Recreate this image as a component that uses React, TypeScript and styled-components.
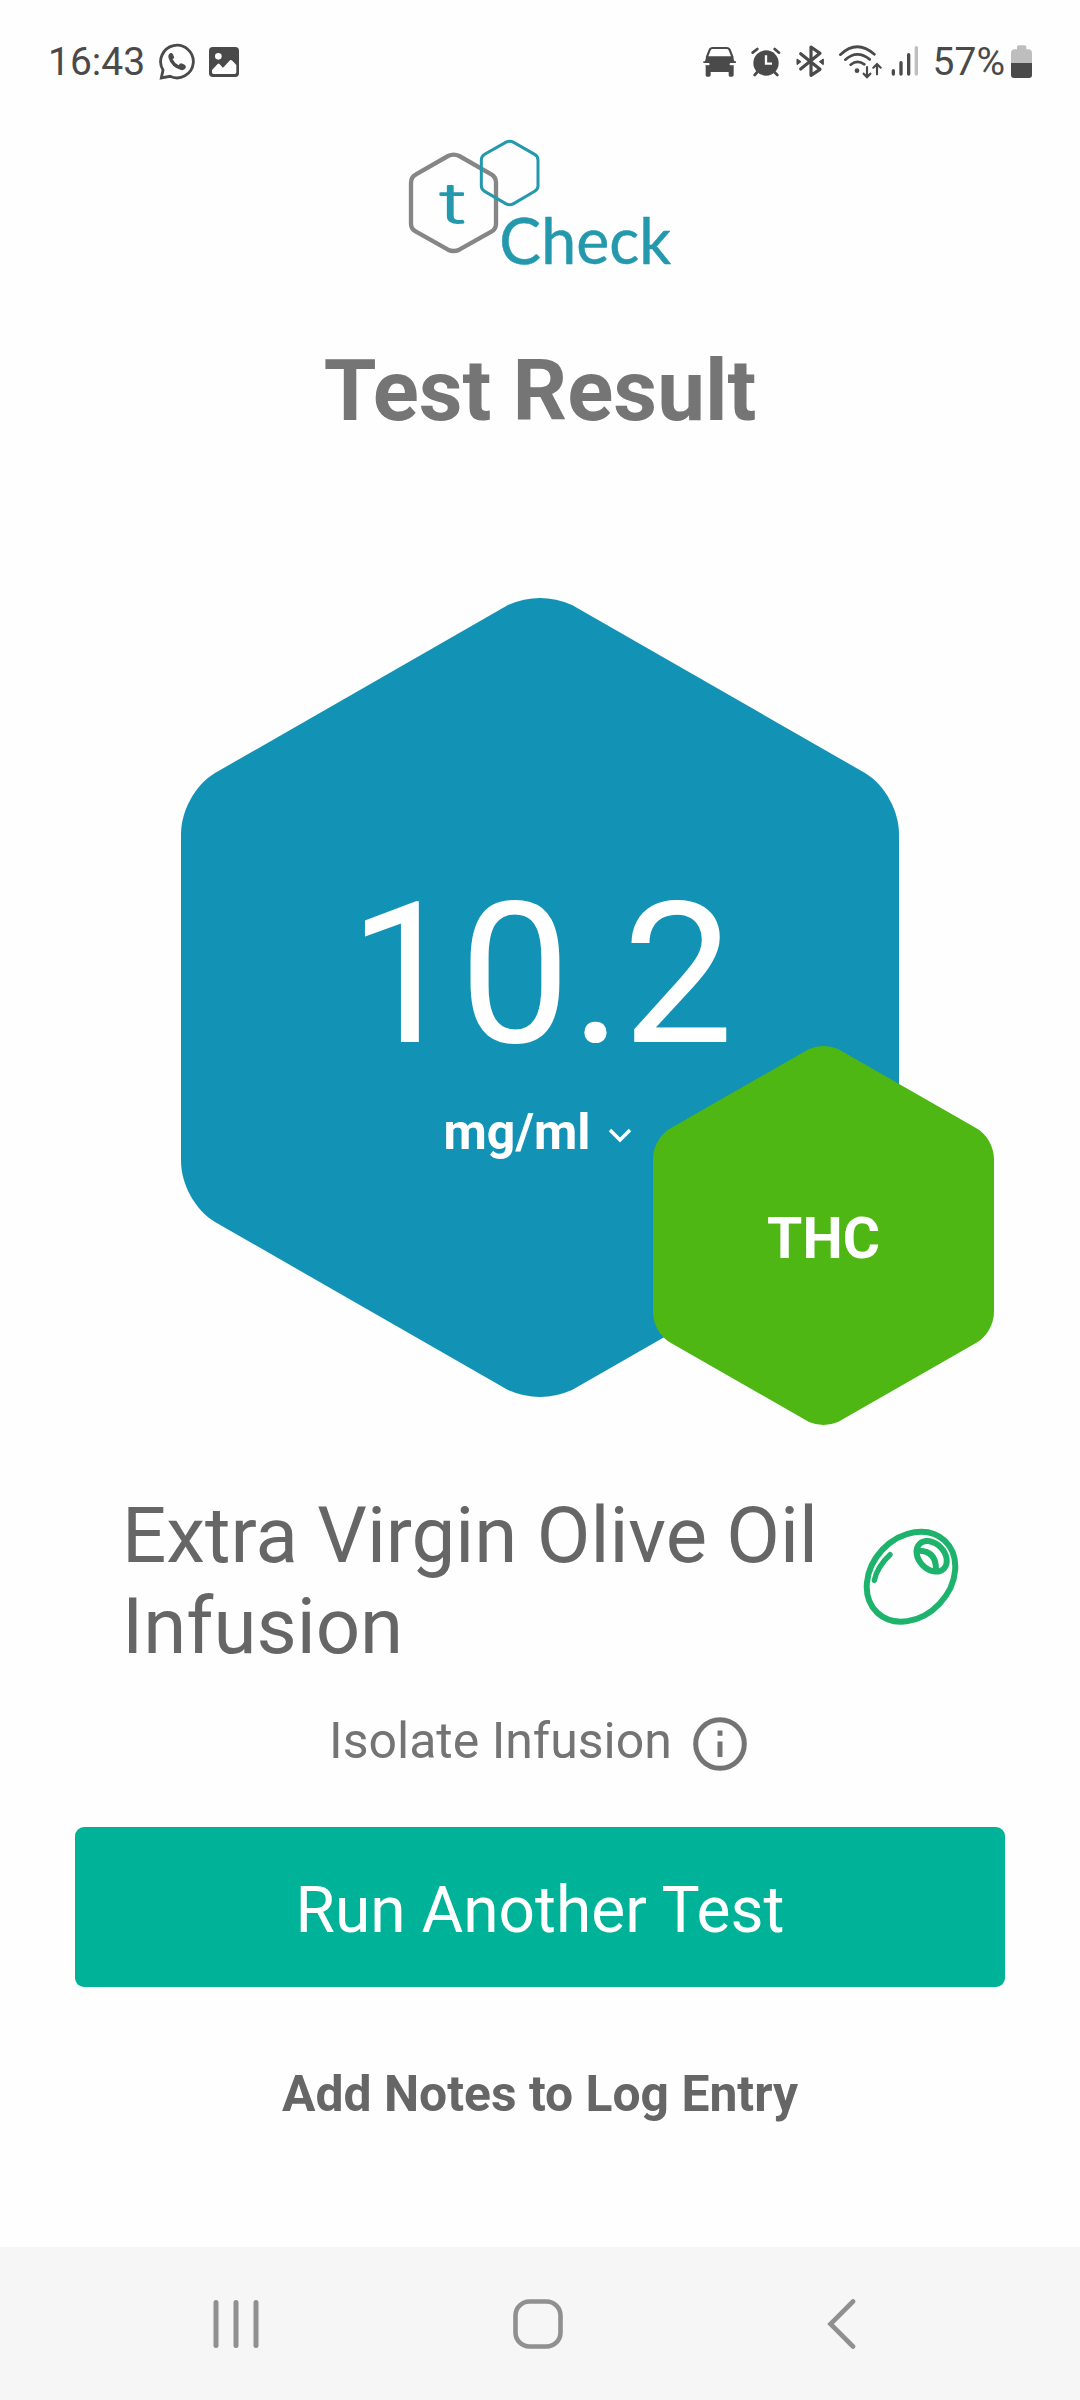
import React from "react";
import styled, { createGlobalStyle } from "styled-components";

const GlobalStyle = createGlobalStyle`
  body { margin: 0; background: #fefefe; }
  * { box-sizing: border-box; }
  svg { display: block; flex: none; }
`;

const Screen = styled.main`
  width: 1080px;
  height: 2400px;
  display: flex;
  flex-direction: column;
  background: #fefefe;
  font-family: Roboto, "Liberation Sans", sans-serif;
  overflow: hidden;
`;

const StatusBar = styled.header`
  height: 123px;
  flex: none;
  display: flex;
  align-items: center;
  justify-content: space-between;
  padding: 0 48px;
  color: #4a4a4a;
`;

const StatusGroup = styled.div<{ $gap: number }>`
  display: flex;
  align-items: center;
  gap: ${(p) => p.$gap}px;
`;

const StatusText = styled.span<{ $before?: number; $after?: number }>`
  font-size: 39px;
  line-height: 46px;
  margin-left: ${(p) => p.$before ?? 0}px;
  margin-right: ${(p) => p.$after ?? 0}px;
`;

const LogoRow = styled.div`
  display: flex;
  justify-content: center;
  margin-top: 16px;
`;

const Title = styled.h1`
  margin: 52px 0 0;
  font-size: 85.3px;
  line-height: 100px;
  font-weight: 700;
  text-align: center;
  color: #757575;
`;

const Result = styled.section`
  position: relative;
  width: 718px;
  height: 799px;
  flex: none;
  margin: 157px 0 0 181px;
  display: flex;
  flex-direction: column;
  align-items: center;
  padding-top: 261px;
  color: #fff;
`;

const HexBackdrop = styled.svg`
  position: absolute;
  inset: 0;
`;

const Value = styled.div`
  position: relative;
  font-size: 197.5px;
  line-height: 232px;
  padding-left: 2px;
`;

const UnitPicker = styled.button`
  position: relative;
  display: flex;
  align-items: center;
  gap: 18px;
  margin: 12px 0 0;
  padding: 0 4px 0 0;
  border: 0;
  background: none;
  color: inherit;
  font: 700 50px/58px Roboto, "Liberation Sans", sans-serif;
`;

const UnitArrow = styled.svg`
  margin-top: 6px;
`;

const Badge = styled.div`
  position: absolute;
  left: 472px;
  top: 448px;
  width: 341px;
  height: 379px;
  display: flex;
  align-items: center;
  justify-content: center;
`;

const BadgeText = styled.span`
  position: relative;
  font-size: 57px;
  line-height: 66px;
  font-weight: 700;
  padding-top: 6px;
`;

const Product = styled.section`
  display: flex;
  align-items: flex-start;
  margin: 93px 0 0 122px;
`;

const ProductName = styled.h2`
  margin: 0;
  width: 740px;
  font-size: 78px;
  line-height: 91px;
  font-weight: 400;
  color: #666;
`;

const ProductIcon = styled.div`
  padding-top: 38px;
`;

const Method = styled.div`
  display: flex;
  align-items: center;
  justify-content: center;
  gap: 21px;
  height: 60px;
  margin-top: 39px;
  padding-right: 4px;
  color: #747474;
  font-size: 50px;
  line-height: 58px;
`;

const InfoIcon = styled.svg`
  margin-top: 6px;
`;

const PrimaryButton = styled.button`
  height: 160px;
  flex: none;
  margin: 56px 75px 0;
  padding: 6px 0 0;
  border: 0;
  border-radius: 9px;
  background: #00b398;
  color: #fff;
  font: 400 64px/75px Roboto, "Liberation Sans", sans-serif;
`;

const NotesButton = styled.button`
  align-self: center;
  margin: 78px 0 0;
  padding: 0;
  border: 0;
  background: none;
  color: #666;
  font: 700 49.8px/58px Roboto, "Liberation Sans", sans-serif;
`;

const NavBar = styled.nav`
  height: 153px;
  flex: none;
  margin-top: auto;
  display: flex;
  align-items: center;
  justify-content: space-between;
  padding: 0 224px 0 213px;
  background: #f6f6f6;
`;

const HomeIcon = styled.svg`
  margin-right: 10px;
`;

const SignalBars = styled.svg`
  margin-left: -6px;
`;

const DARK = "#4a4a4a";

const WhatsAppIcon = () => (
  <svg width="37" height="37" viewBox="388 67 111 111">
    <path d="M400 148A49 49 0 1 1 421 167L395 172Z" fill="none" stroke={DARK} strokeWidth="8.5" strokeLinejoin="miter" />
    <path d="M421 98q-7 5-4 15q8 27 37 35q9 2 14-6q2-8-3-10l-10-4q-5 0-8 6q-12-5-18-18q6-4 4-8l-4-9q-3-4-8-1Z" fill={DARK} />
  </svg>
);

const PictureIcon = () => (
  <svg width="30" height="30" viewBox="537 77 90 90">
    <rect x="537" y="77" width="90" height="90" rx="11" fill={DARK} />
    <circle cx="565" cy="105" r="10" fill="#fefefe" />
    <path d="M546 146L563 128Q566 125 569 129L579 139L600 117Q603 114 607 118L619 131V153Q619 158 614 158H551Q546 158 546 153Z" fill="#fefefe" />
  </svg>
);

const CarIcon = () => (
  <svg width="33" height="31" viewBox="68 76 99 93">
    <path d="M79 111L88 88Q90 82 97 82H139Q146 82 148 88L157 111" fill="none" stroke={DARK} strokeWidth="6.5" />
    <path d="M78 107H158L162 122H168L166 128L160 135V163Q160 168 155 168H149Q145 168 145 163V154H91V163Q91 168 86 168H80Q76 168 76 163V135L69 128V122H74Z" fill={DARK} />
    <path d="M68 127H86Q90 131 86 134H68ZM168 127H150Q145 131 150 134H168Z" fill="#fefefe" />
  </svg>
);

const AlarmIcon = () => (
  <svg width="30" height="30" viewBox="212 77 90 90">
    <circle cx="257" cy="125" r="38" fill={DARK} />
    <path d="M217 94L231 83M283 83L296 94" stroke={DARK} strokeWidth="8" strokeLinecap="round" />
    <path d="M231 152L223 161M282 152L291 161" stroke={DARK} strokeWidth="8" strokeLinecap="round" />
    <path d="M257 102V127H275" fill="none" stroke="#fefefe" strokeWidth="7" />
  </svg>
);

const BluetoothIcon = () => (
  <svg width="28" height="33" viewBox="346 72 84 99">
    <path d="M360 98L418 145L391 163V78L418 97L360 144" fill="none" stroke={DARK} strokeWidth="9.5" strokeLinejoin="round" strokeLinecap="round" />
    <path d="M349 114L361 122L349 131ZM428 114L416 122L428 131Z" fill={DARK} stroke={DARK} strokeWidth="3" strokeLinejoin="round" />
  </svg>
);

const WifiIcon = () => (
  <svg width="43" height="34" viewBox="473 71 129 102">
    <g fill="none" stroke={DARK} strokeWidth="8" strokeLinecap="round" strokeLinejoin="round">
      <path d="M477 100Q527 53 579 99M492 115Q527 84 565 114M508 130Q528 114 549 129" />
      <path d="M557 137V167M547 157L557 168L567 157M587 159V129M576 139L587 128L598 139" strokeWidth="6.5" />
    </g>
    <circle cx="527" cy="148" r="7" fill={DARK} />
  </svg>
);

const SignalIcon = () => (
  <SignalBars width="28" height="31" viewBox="629 76 84 93">
    <g strokeWidth="10" strokeLinecap="round" stroke={DARK}>
      <path d="M636 150V160M659 126V160M682 102V160" />
      <path d="M705 81V160" stroke="#bebebe" />
    </g>
  </SignalBars>
);

const BatteryIcon = () => (
  <svg width="21" height="33" viewBox="993 72 63 99">
    <path d="M1011 85V78Q1011 73 1016 73H1034Q1039 73 1039 78V85H1048Q1056 87 1056 95V126H993V95Q993 87 1001 85Z" fill="#bebebe" />
    <path d="M993 126H1056V162Q1056 171 1047 171H1002Q993 171 993 162Z" fill={DARK} />
  </svg>
);

const Logo = () => (
  <svg width="264" height="150" viewBox="54 57 792 450">
    <path
      d="M174 108Q191 100 208 108L304 163Q318 171 318 188V312Q318 327 304 335L208 389Q191 397 174 389L78 335Q63 327 63 312V188Q63 171 78 163Z"
      fill="none" stroke="#868686" strokeWidth="13"
    />
    <path
      d="M347 67Q359 61 371 67L434 103Q444 109 444 120V198Q444 208 434 214L371 251Q359 258 347 251L284 214Q274 208 274 198V120Q274 109 284 103Z"
      fill="none" stroke="#2499ae" strokeWidth="9"
    />
    <g fill="#2499ae" stroke="#2499ae" strokeLinejoin="round">
      <text x="151" y="308" fontSize="166" fontFamily="Inter, sans-serif" fontWeight="200" strokeWidth="5" textLength="74" lengthAdjust="spacingAndGlyphs">t</text>
      <text x="328" y="431" fontSize="189" fontFamily="Lato, sans-serif" strokeWidth="1.5" textLength="515" lengthAdjust="spacingAndGlyphs">Check</text>
    </g>
  </svg>
);

const OliveIcon = () => (
  <svg width="98" height="98" viewBox="66 54 294 294" fill="none" stroke="#1db36c" strokeWidth="18" strokeLinecap="round">
    <ellipse cx="213" cy="200" rx="148" ry="118" transform="rotate(-47 213 200)" />
    <ellipse cx="275" cy="139" rx="52" ry="38" transform="rotate(46 275 139)" strokeWidth="18" />
    <path d="M238 122Q287 123 288 176" strokeWidth="18" />
    <path d="M103 211Q112 169 150 134" strokeWidth="16" />
  </svg>
);

export default function App() {
  return (
    <Screen>
      <GlobalStyle />
      <StatusBar>
        <StatusGroup $gap={13}>
          <StatusText $after={1}>16:43</StatusText>
          <WhatsAppIcon />
          <PictureIcon />
        </StatusGroup>
        <StatusGroup $gap={15}>
          <CarIcon />
          <AlarmIcon />
          <BluetoothIcon />
          <WifiIcon />
          <SignalIcon />
          <StatusText $after={-9} $before={-1}>57%</StatusText>
          <BatteryIcon />
        </StatusGroup>
      </StatusBar>

      <LogoRow><Logo /></LogoRow>
      <Title>Test Result</Title>

      <Result>
        <HexBackdrop width="718" height="799" viewBox="0 0 718 799">
          <path
            d="M327 7Q359 -7 391 7L684 175C704 187 718 213 718 236V563C718 586 704 612 684 624L391 792Q359 806 327 792L34 624C14 612 0 586 0 563V236C0 213 14 187 34 175Z"
            fill="#1293b5"
          />
        </HexBackdrop>
        <Value>10.2</Value>
        <UnitPicker>
          mg/ml
          <UnitArrow width="24" height="15" viewBox="0 0 24 15">
            <path d="M2 2L12 12L22 2" fill="none" stroke="#fff" strokeWidth="3.4" />
          </UnitArrow>
        </UnitPicker>
        <Badge>
          <HexBackdrop width="341" height="379" viewBox="0 0 341 379">
            <path
              d="M156 3Q170.500 -3 185 3L323 82C334 88 341 101 341 113V266C341 278 334 291 323 297L185 376Q170.500 382 156 376L18 297C7 291 0 278 0 266V113C0 101 7 88 18 82Z"
              fill="#4eb714"
            />
          </HexBackdrop>
          <BadgeText>THC</BadgeText>
        </Badge>
      </Result>

      <Product>
        <ProductName>Extra Virgin Olive Oil Infusion</ProductName>
        <ProductIcon><OliveIcon /></ProductIcon>
      </Product>

      <Method>
        Isolate Infusion
        <InfoIcon width="54" height="54" viewBox="0 0 54 54">
          <circle cx="27" cy="27" r="24.300" fill="none" stroke="#747474" strokeWidth="5" />
          <path d="M27 24.500V40M27 13.500V18.700" stroke="#747474" strokeWidth="5" />
        </InfoIcon>
      </Method>

      <PrimaryButton>Run Another Test</PrimaryButton>
      <NotesButton>Add Notes to Log Entry</NotesButton>

      <NavBar>
        <svg width="46" height="50" viewBox="0 0 46 50">
          <path d="M3 3.500V46.500M23 3.500V46.500M43 3.500V46.500" stroke="#909090" strokeWidth="5" strokeLinecap="round" />
        </svg>
        <HomeIcon width="50" height="50" viewBox="0 0 50 50">
          <rect x="2.500" y="2.500" width="45" height="45" rx="14" fill="none" stroke="#909090" strokeWidth="4.600" />
        </HomeIcon>
        <svg width="29" height="50" viewBox="0 0 29 50">
          <path d="M26 2.500L3.500 25L26 47.500" fill="none" stroke="#909090" strokeWidth="4.600" strokeLinecap="round" />
        </svg>
      </NavBar>
    </Screen>
  );
}
